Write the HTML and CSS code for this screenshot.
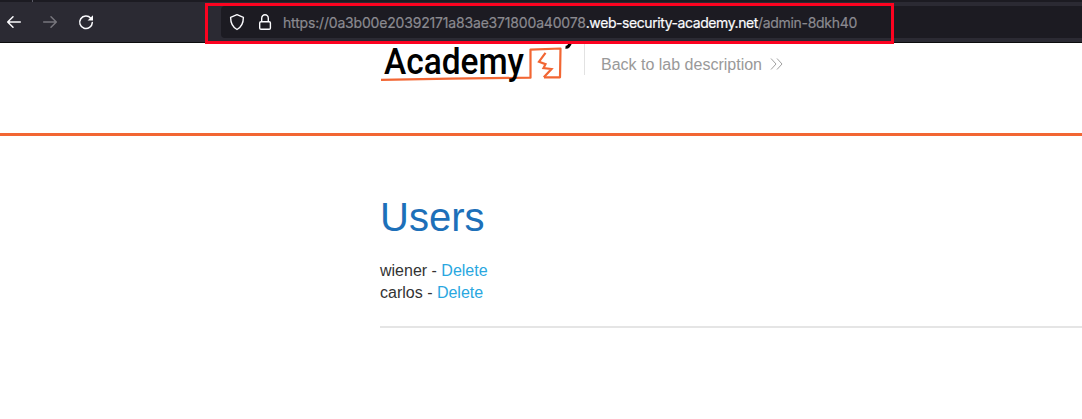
FILE: index.html
```html
<!DOCTYPE html>
<html lang="en">
<head>
<meta charset="utf-8">
<title>Users</title>
<link rel="stylesheet" href="styles.css">
</head>
<body>
<div class="browser">
  <div class="tabs"><i class="tab-divider"></i></div>
  <div class="toolbar">
    <div class="nav">
      <svg width="100" height="40" viewBox="0 2 100 40" fill="none" stroke-linecap="round" stroke-linejoin="round" stroke-width="1.5">
        <path stroke="#fbfbfe" d="M20.3 22H8M13 16.7 7.7 22l5.3 5.3"/>
        <path stroke="#77767d" d="M43.7 22H56M51 16.7l5.3 5.3-5.3 5.3"/>
        <path stroke="#fbfbfe" d="M90.8 18.2A6.3 6.3 0 1 0 92.3 22.6"/>
        <path fill="#fbfbfe" d="M93 15.2v5.4h-5.4z"/>
      </svg>
    </div>
    <div class="urlbar">
      <svg class="url-icons" width="54" height="32" viewBox="221 6 54 32" fill="none" stroke="#fbfbfe" stroke-width="1.4" stroke-linejoin="round">
        <path d="M237 14.7 243.4 17.3c0 5.5-1.8 9.8-6.4 12.2-4.6-2.4-6.4-6.7-6.4-12.2z"/>
        <rect x="259.7" y="21.7" width="10.7" height="7.6" rx="1.3"/>
        <path d="M261.7 21.5v-3.2a3.3 3.5 0 0 1 6.6 0v3.2"/>
      </svg>
      <div class="url"><span class="sub">https://0a3b00e20392171a83ae371800a40078</span><span class="domain">.web-security-academy.net</span><span class="path">/admin-8dkh40</span></div>
    </div>
  </div>
  <div class="highlight"></div>
</div>
<header class="lab-header">
  <svg class="logo" width="204" height="47" viewBox="380 43 204 47">
    <path d="M381 79.900 450 78.700 530.500 77.700V49.600L560.500 48.500 560 77.300 544 77.300" fill="none" stroke="#f26633" stroke-width="2.200" stroke-linejoin="round"/>
    <path d="M545.500 52.800 539 61.700 545.500 64.200 543.500 68 551.500 69 543.800 77.200" fill="none" stroke="#f26633" stroke-width="2.200"/>
    <text class="logo-text" x="384" y="74" textLength="140" lengthAdjust="spacingAndGlyphs">Academy</text>
    <path d="M565.500 47.200c2.400.3 3.900-.8 5.200-5.200" fill="none" stroke="#000" stroke-width="3"/>
  </svg>
  <a class="back"><span>Back to lab description</span>
    <svg width="14" height="14" viewBox="0 0 14 14" fill="none" stroke="#a0a0a0" stroke-width="1"><path d="M1 1.500 6 7 1 12.500M7 1.500 12 7 7 12.500"/></svg>
  </a>
</header>
<main class="content">
  <h1>Users</h1>
  <div class="user">wiener - <a>Delete</a></div>
  <div class="user">carlos - <a>Delete</a></div>
  <hr>
</main>
</body>
</html>
```
FILE: styles.css
```css
body { margin: 0; background: #fff; font-family: "Liberation Sans", Arial, sans-serif; color: #333; overflow: hidden; }
.browser { position: relative; z-index: 1; height: 43px; background: #2b2a33; box-sizing: border-box; border-bottom: 1px solid #0c0c0d; }
.tabs { height: 2px; background: #1c1b22; }
.tab-divider { display: block; width: 1px; height: 2px; margin-left: 32px; background: #5b5b66; }
.toolbar { display: flex; height: 40px; align-items: center; }
.nav { width: 221px; height: 40px; }
.urlbar { display: flex; flex: 1; height: 32px; align-items: center; background: #1c1b22; border-radius: 4px 0 0 4px; }
.url-icons { flex: none; margin-right: 8px; }
.url { padding-top: 2px; font: 14px/32px Inter, sans-serif; color: #8b8a90; white-space: nowrap; -webkit-text-stroke: 0.2px; }
.url .sub { letter-spacing: -0.18px; }
.url .domain { color: #fbfbfe; letter-spacing: -0.42px; }
.url .path { letter-spacing: -0.3px; }
.highlight { position: absolute; left: 205px; top: 3px; width: 689px; height: 41px; box-sizing: border-box; border: 3px solid #fc0320; }
.lab-header { display: flex; height: 90px; padding-left: 380px; border-bottom: 3px solid #f26633; }
.logo { display: block; flex: none; overflow: visible; }
.logo-text { font: 500 36px Roboto, sans-serif; fill: #000; }
.back { display: flex; height: 32px; padding-left: 16px; border-left: 1px solid #e2e2e2; color: #999; font-size: 16px; line-height: 43px; gap: 8px; }
.back svg { margin-top: 14px; }
.content { padding: 58px 0 0 380px; }
h1 { margin: 0 0 20px; color: #1d70b9; font-size: 40px; line-height: 46px; font-weight: 400; }
.user { font-size: 16px; line-height: 22px; }
.user a { color: #29a7df; }
hr { margin: 22px 0 0; border: 0; height: 2px; background: #e5e5e5; }
```
